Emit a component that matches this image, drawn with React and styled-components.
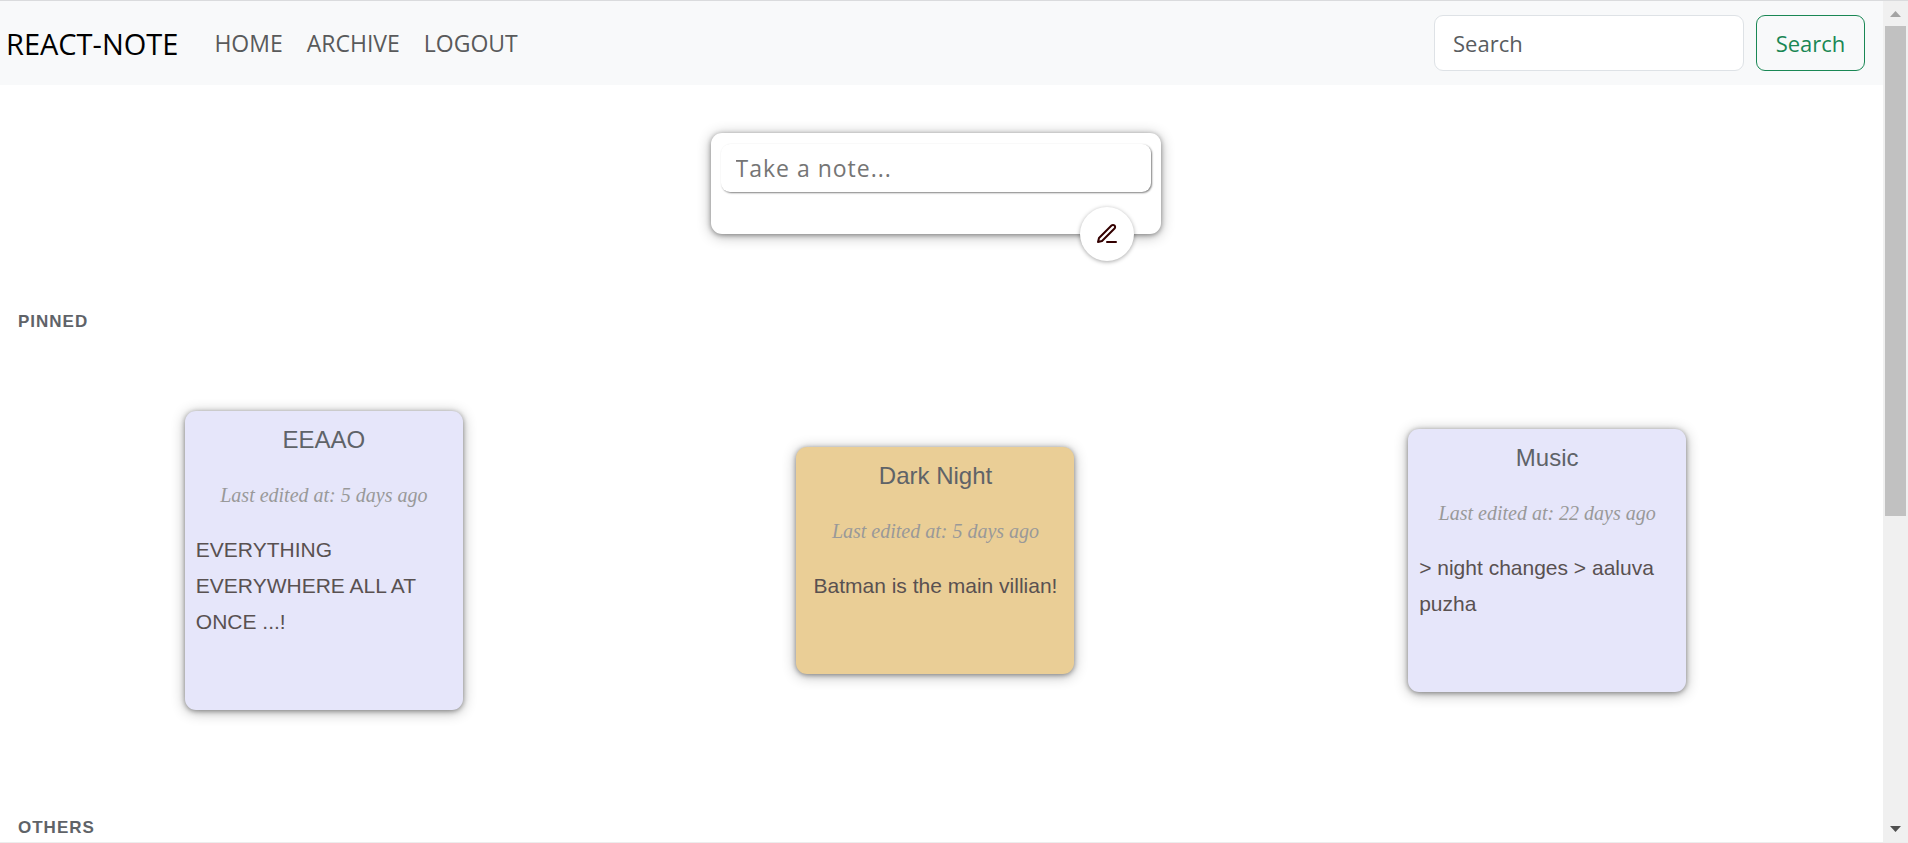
import React from 'react';
import styled, { createGlobalStyle } from 'styled-components';
import { FiEdit3 } from 'react-icons/fi';

const GlobalStyle = createGlobalStyle`
  *, *::before, *::after { box-sizing: border-box; }
  body {
    margin: 0;
    background: #fff;
    font-family: 'Open Sans', 'Noto Sans', sans-serif;
    font-size: 22px;
  }
  p, h1, h2, h3, ul { margin: 0; padding: 0; font-weight: 400; }
  input, button { font: inherit; }
`;

const Shell = styled.div`
  display: grid;
  grid-template-columns: minmax(0, 1fr) 25px;
  height: 100vh;
  overflow: hidden;
  border-top: 1px solid #dadbdd;
  border-bottom: 1px solid #ededed;
`;

const Page = styled.div`
  min-width: 0;
  overflow: hidden;
`;

const Navbar = styled.header`
  display: flex;
  align-items: center;
  height: 84px;
  padding: 0 18px 0 6px;
  background: #f8f9fa;
`;

const Brand = styled.a`
  margin-right: 36px;
  color: #000;
  font-size: 29px;
  text-decoration: none;
`;

const NavLinks = styled.nav`
  display: flex;
  gap: 24px;
  flex: 1;
`;

const NavLink = styled.a`
  color: #595a5b;
  font-size: 23px;
  text-decoration: none;
`;

const SearchForm = styled.form`
  display: flex;
  gap: 12px;
`;

const SearchInput = styled.input`
  width: 310px;
  height: 56px;
  padding: 0 18px;
  border: 1px solid #dee2e6;
  border-radius: 9px;
  background: #fff;
  &::placeholder { color: #595c5f; opacity: 1; }
`;

const SearchButton = styled.button`
  width: 109px;
  height: 56px;
  padding: 0;
  border: 1px solid #198754;
  border-radius: 9px;
  background: transparent;
  color: #198754;
`;

const Content = styled.main`
  display: flex;
  flex-direction: column;
  padding: 48px 30px 0 18px;
`;

const raised = '0 1px 5px rgba(0, 0, 0, 0.38), 0 2px 14px rgba(0, 0, 0, 0.3)';

const Composer = styled.form`
  position: relative;
  align-self: center;
  width: 450px;
  height: 101px;
  padding: 11px 10px;
  border-radius: 11px;
  background: #fff;
  box-shadow: ${raised};
`;

const NoteInput = styled.input`
  display: block;
  width: 100%;
  height: 48px;
  padding: 0 15px;
  border: 0;
  border-radius: 9px;
  background: #fff;
  box-shadow: 1px 1px 2px #808080;
  font-size: 23px;
  letter-spacing: 1px;
  &::placeholder { color: #757575; opacity: 1; }
`;

const ComposeButton = styled.button`
  position: absolute;
  right: 27px;
  bottom: -27px;
  display: grid;
  place-items: center;
  width: 54px;
  height: 54px;
  padding: 0;
  border: 0;
  border-radius: 50%;
  background: #fff;
  color: #330000;
  box-shadow: 0 1px 4px rgba(0, 0, 0, 0.35);
`;

const SectionTitle = styled.h2`
  margin-top: ${(p) => p.$gap}px;
  color: #5f6368;
  font: 700 17px/24px 'Liberation Sans', Arial, sans-serif;
  letter-spacing: 1px;
`;

const NoteGrid = styled.section`
  display: grid;
  grid-template-columns: repeat(3, minmax(0, 1fr));
  place-items: center;
  margin-top: 77px;
`;

const Note = styled.article`
  display: flex;
  flex-direction: column;
  align-items: center;
  gap: 19px;
  width: 278px;
  padding: 11px 11px 70px;
  border-radius: 11px;
  background: ${(p) => p.$color};
  box-shadow: ${raised};
  font-family: 'Liberation Sans', Arial, sans-serif;
  line-height: 36px;
`;

const NoteTitle = styled.h3`
  color: #5f6368;
  font-size: 24px;
`;

const Edited = styled.p`
  color: #999;
  font-family: 'Liberation Serif', 'Times New Roman', serif;
  font-size: 20px;
  font-style: italic;
`;

const NoteText = styled.p`
  color: #595151;
  font-size: 21px;
`;

const Scrollbar = styled.div`
  display: flex;
  flex-direction: column;
  background: #f0f0f0;
`;

const Arrow = styled.svg`
  flex: none;
  width: 25px;
  height: 25px;
  fill: ${(p) => p.$tone};
`;

const Track = styled.div`
  flex: 1;
  padding: 0 2px;
`;

const Thumb = styled.div`
  height: 62%;
  background: #c1c1c1;
`;

const notes = [
  { title: 'EEAAO', edited: '5 days ago', text: 'EVERYTHING EVERYWHERE ALL AT ONCE ...!', color: '#e6e6fa' },
  { title: 'Dark Night', edited: '5 days ago', text: 'Batman is the main villian!', color: '#eace96' },
  { title: 'Music', edited: '22 days ago', text: '> night changes > aaluva puzha', color: '#e6e6fa' },
];

export default function App() {
  return (
    <>
      <GlobalStyle />
      <Shell>
        <Page>
          <Navbar>
            <Brand href="#">REACT-NOTE</Brand>
            <NavLinks>
              <NavLink href="#home">HOME</NavLink>
              <NavLink href="#archive">ARCHIVE</NavLink>
              <NavLink href="#logout">LOGOUT</NavLink>
            </NavLinks>
            <SearchForm role="search">
              <SearchInput type="search" placeholder="Search" aria-label="Search" />
              <SearchButton type="button">Search</SearchButton>
            </SearchForm>
          </Navbar>
          <Content>
            <Composer>
              <NoteInput type="text" placeholder="Take a note..." aria-label="Take a note" />
              <ComposeButton type="button" aria-label="Write note">
                <FiEdit3 size={24} />
              </ComposeButton>
            </Composer>
            <SectionTitle $gap={76}>PINNED</SectionTitle>
            <NoteGrid>
              {notes.map((note) => (
                <Note key={note.title} $color={note.color}>
                  <NoteTitle>{note.title}</NoteTitle>
                  <Edited>Last edited at: {note.edited}</Edited>
                  <NoteText>{note.text}</NoteText>
                </Note>
              ))}
            </NoteGrid>
            <SectionTitle $gap={106}>OTHERS</SectionTitle>
          </Content>
        </Page>
        <Scrollbar aria-hidden="true">
          <Arrow viewBox="0 0 25 25" $tone="#a3a3a3"><path d="M7 16L12.500 10L18 16Z" /></Arrow>
          <Track><Thumb /></Track>
          <Arrow viewBox="0 0 25 25" $tone="#505050"><path d="M7 9L12.500 15L18 9Z" /></Arrow>
        </Scrollbar>
      </Shell>
    </>
  );
}
